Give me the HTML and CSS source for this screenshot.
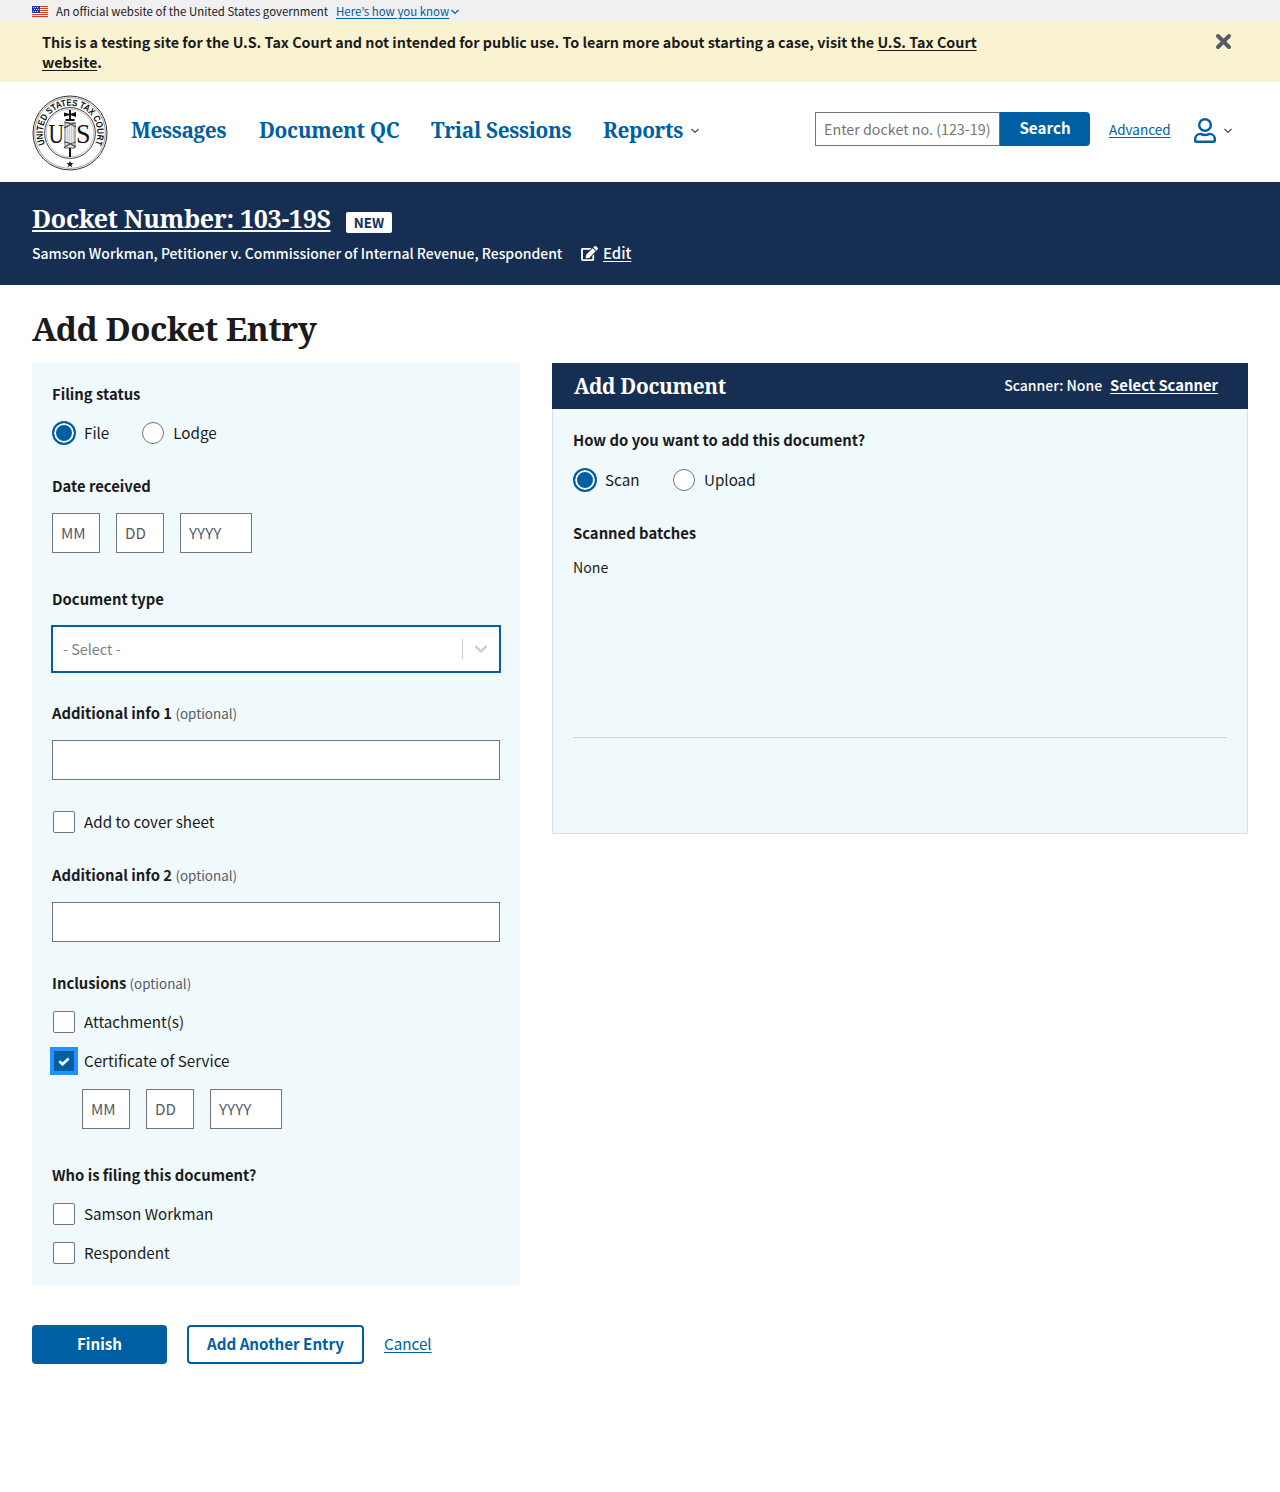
FILE: index.html
```html
<!DOCTYPE html>
<html lang="en">
<head>
<meta charset="utf-8">
<title>Add Docket Entry</title>
<link rel="stylesheet" href="styles.css">
</head>
<body>
<div class="gov-banner">
  <svg class="flag" width="16" height="11" viewBox="0 0 16 11" shape-rendering="crispEdges">
    <rect width="16" height="11" fill="#fff"/>
    <path d="M0 .5h16M0 2.5h16M0 4.5h16M0 6.5h16M0 8.5h16M0 10.5h16" stroke="#db3e1f"/>
    <rect width="8" height="7" fill="#1e33b1"/>
    <path d="M1 1.5h1m1 0h1m1 0h1M2 3.5h1m1 0h1m1 0h1M1 5.5h1m1 0h1m1 0h1" stroke="#dfe3f5"/>
  </svg>
  <span class="gov-text">An official website of the United States government</span>
  <a class="gov-link" href="#">Here’s how you know</a>
  <svg class="gov-chevron" width="8" height="6" viewBox="0 0 8 6"><path d="M.5 1 4 4.4 7.5 1" fill="none" stroke="#005ea2" stroke-width="1.2"/></svg>
</div>

<div class="notice">
  <p class="notice-text">This is a testing site for the U.S. Tax Court and not intended for public use. To learn more about starting a case, visit the <a href="#">U.S. Tax Court</a><br><a href="#">website</a>.</p>
  <svg class="notice-close" width="17" height="17" viewBox="0 0 17 17"><path d="M3 3 14 14M14 3 3 14" stroke="#565c65" stroke-width="4" stroke-linecap="round"/></svg>
</div>

<header class="site-header">
  <svg class="seal" width="76" height="76" viewBox="-38 -38 76 76">
    <defs><path id="ring" d="M0 27.3A27.3 27.3 0 0 1 0 -27.3A27.3 27.3 0 0 1 0 27.3"/></defs>
    <circle r="37" fill="#fff" stroke="#333" stroke-width="1"/>
    <circle r="35.4" fill="none" stroke="#777" stroke-width=".7"/>
    <circle r="25.4" fill="none" stroke="#444" stroke-width="1"/>
    <circle r="23.8" fill="none" stroke="#999" stroke-width=".6"/>
    <text class="seal-ring"><textPath href="#ring" startOffset="50%" text-anchor="middle" textLength="109" lengthAdjust="spacingAndGlyphs">UNITED STATES TAX COURT</textPath></text>
    <text class="seal-letter" x="-21.5" y="9.5" textLength="15.5" lengthAdjust="spacingAndGlyphs">U</text>
    <text class="seal-letter" x="6" y="9.5" textLength="14.5" lengthAdjust="spacingAndGlyphs">S</text>
    <path d="M-5-10H5V15H-5z" fill="#fff" stroke="#555" stroke-width=".9"/>
    <path d="M-2.8-9V15M-.8-9V15M1.2-9V15M3.2-9V15" stroke="#888" stroke-width=".6"/>
    <path d="M0-23V-12M0 15V24" stroke="#111" stroke-width="2"/>
    <path d="M-6-20.500V-16.500L0-18 6-16V-21L0-19ZM-4.500-14H4.500V-12H-4.500Z" fill="#111"/>
    <path d="M-6-11C-1-11 2-8 6-6M-6-5C-2-7 2-10 6-10M-6 9C-1 9 2 12 6 14M-6 15C-2 11 2 10 6 9" fill="none" stroke="#444" stroke-width="1.200"/>
    <path d="m0 27.700.900 2.400 2.500.100-2 1.600.700 2.400L0 32.800l-2.100 1.400.700-2.400-2-1.600 2.500-.100z" fill="#111"/>
  </svg>
  <nav class="nav">
    <a class="nav-link nav-messages" href="#">Messages</a>
    <a class="nav-link nav-qc" href="#">Document QC</a>
    <a class="nav-link nav-trial" href="#">Trial Sessions</a>
    <a class="nav-link nav-reports" href="#">Reports</a>
    <svg class="chevron" width="8" height="6" viewBox="0 0 8 6"><path d="M.5 1 4 4.5 7.5 1" fill="none" stroke="#3d4551" stroke-width="1.1"/></svg>
  </nav>
  <form class="search">
    <span class="search-input">Enter docket no. (123-19)</span>
    <button class="search-button" type="button">Search</button>
  </form>
  <a class="advanced" href="#">Advanced</a>
  <svg class="user" width="22" height="26" viewBox="0 0 22 26"><g fill="none" stroke="#005ea2" stroke-width="2.4"><circle cx="11" cy="7" r="5.8"/><path d="M6.7 15.9C9.5 17.3 12.5 17.3 15.3 15.9C18.9 15.9 20.8 18.3 20.8 21.3V22.5Q20.8 23.8 19.5 23.8H2.5Q1.2 23.8 1.2 22.5V21.3C1.2 18.3 3.1 15.9 6.7 15.9Z"/></g></svg>
  <svg class="chevron" width="8" height="6" viewBox="0 0 8 6"><path d="M.5 1 4 4.5 7.5 1" fill="none" stroke="#3d4551" stroke-width="1.1"/></svg>
</header>

<section class="docket">
  <div class="docket-top">
    <a class="docket-number" href="#">Docket Number: 103-19S</a>
    <span class="tag">NEW</span>
  </div>
  <div class="docket-bottom">
    <span class="caption">Samson Workman, Petitioner v. Commissioner of Internal Revenue, Respondent</span>
    <svg class="edit-icon" width="17" height="15" viewBox="0 0 576 512"><path fill="#fff" d="M402.600 83.200l90.200 90.200c3.800 3.800 3.800 10 0 13.800L274.400 405.600l-92.800 10.300c-12.400 1.400-22.900-9.100-21.500-21.500l10.300-92.800L388.800 83.200c3.800-3.800 10-3.800 13.800 0zm162-22.900l-48.800-48.800c-15.200-15.200-39.900-15.200-55.200 0l-35.400 35.400c-3.800 3.800-3.800 10 0 13.800l90.200 90.200c3.800 3.800 10 3.800 13.800 0l35.400-35.400c15.200-15.300 15.200-40 0-55.200zM384 346.200V448H64V128h229.800c3.200 0 6.200-1.300 8.500-3.500l40-40c7.600-7.600 2.200-20.500-8.500-20.500H48C21.500 64 0 85.500 0 112v352c0 26.500 21.500 48 48 48h352c26.500 0 48-21.500 48-48V306.200c0-10.700-12.900-16-20.500-8.500l-40 40c-2.200 2.300-3.500 5.300-3.500 8.500z"/></svg>
    <a class="edit" href="#">Edit</a>
  </div>
</section>

<main class="main">
  <h1 class="title">Add Docket Entry</h1>
  <div class="columns">
    <section class="panel form-panel">
      <div class="label">Filing status</div>
      <div class="options">
        <label class="option"><span class="radio radio-on"></span>File</label>
        <label class="option"><span class="radio"></span>Lodge</label>
      </div>
      <div class="label gap-30">Date received</div>
      <div class="dates"><span class="field short">MM</span><span class="field short">DD</span><span class="field year">YYYY</span></div>
      <div class="label gap-35">Document type</div>
      <div class="select"><span class="select-text">- Select -</span><span class="select-divider"></span><svg width="14" height="9" viewBox="0 0 14 9"><path d="m2 1.700 5 4.800 5-4.800" fill="none" stroke="#ccc" stroke-width="2.300" stroke-linecap="round"/></svg></div>
      <div class="label gap-29">Additional info 1 <span class="optional">(optional)</span></div>
      <div class="field wide"></div>
      <label class="option gap-30"><span class="check"></span>Add to cover sheet</label>
      <div class="label gap-30">Additional info 2 <span class="optional">(optional)</span></div>
      <div class="field wide"></div>
      <div class="label gap-30">Inclusions <span class="optional">(optional)</span></div>
      <label class="option gap-16"><span class="check"></span>Attachment(s)</label>
      <label class="option gap-15"><span class="check check-on"><svg width="12" height="9" viewBox="0 0 12 9"><path d="M1.300 4.300 4.500 7.300 10.700 1.500" fill="none" stroke="#fff" stroke-width="2.700"/></svg></span>Certificate of Service</label>
      <div class="dates indented"><span class="field short">MM</span><span class="field short">DD</span><span class="field year">YYYY</span></div>
      <div class="label gap-35">Who is filing this document?</div>
      <label class="option gap-16"><span class="check"></span>Samson Workman</label>
      <label class="option gap-15"><span class="check"></span>Respondent</label>
    </section>

    <section class="panel document-panel">
      <div class="document-head">
        <h2 class="document-title">Add Document</h2>
        <span class="scanner">Scanner: None</span>
        <a class="select-scanner" href="#">Select Scanner</a>
      </div>
      <div class="document-body">
        <div class="label">How do you want to add this document?</div>
        <div class="options scan-options">
          <label class="option"><span class="radio radio-on"></span>Scan</label>
          <label class="option"><span class="radio"></span>Upload</label>
        </div>
        <div class="label gap-30">Scanned batches</div>
        <div class="none">None</div>
        <hr class="rule">
      </div>
    </section>
  </div>
  <div class="actions">
    <button class="button primary" type="button">Finish</button>
    <button class="button outline" type="button">Add Another Entry</button>
    <a class="cancel" href="#">Cancel</a>
  </div>
</main>
</body>
</html>
```

FILE: styles.css
```css
* { box-sizing: border-box; }
body {
  margin: 0;
  min-height: 1492px;
  background: #fff;
  color: #1b1b1b;
  font: 15.2px/22px "Source Sans Pro", "Noto Sans CJK JP", "Noto Sans", sans-serif;
  white-space: nowrap;
}
svg { display: block; flex: none; }
a { color: #005ea2; text-decoration: underline; text-decoration-thickness: 1px; text-underline-offset: 2px; }
button { font: inherit; margin: 0; padding: 0; white-space: nowrap; }

.gov-banner { display: flex; align-items: center; height: 22px; padding: 0 32px; background: #f0f0f0; font-size: 11.48px; line-height: 18px; }
.gov-text { width: 280px; margin-left: 8px; }
.gov-link { margin-right: 2px; }
.flag { margin-top: 1px; }
.gov-chevron { margin-top: 2px; }

.notice { display: flex; justify-content: space-between; height: 60px; padding: 10px 48px 0 42px; background: #faf3d1; }
.notice-text { margin: 0; font-size: 14.33px; line-height: 20px; font-weight: 700; }
.notice-text a { color: inherit; }
.notice-close { margin-top: 1px; }

.site-header { display: flex; align-items: center; height: 100px; padding: 0 48px 0 32px; }
.seal { margin-top: 1px; }
.seal-ring { font: 700 9.4px "Liberation Sans", Arial, sans-serif; fill: #111; }
.seal-letter { font: 28px "Liberation Serif", serif; fill: #111; }
.nav { display: flex; align-items: center; width: 707px; padding-left: 23px; }
.nav-link { font: 700 20.8px/30px "Source Serif Pro", "Noto Serif", "Liberation Serif", serif; letter-spacing: -0.33px; text-decoration: none; margin-top: -5px; }
.nav-messages { width: 128px; }
.nav-qc { width: 172px; }
.nav-trial { width: 172px; }
.nav-reports { width: 88px; }
.chevron { margin-top: -3px; }
.search { display: flex; width: 275px; height: 34px; margin-top: -6px; }
.search-input { width: 185px; border: 1px solid #71767a; padding-left: 8px; line-height: 31px; font-size: 14.3px; color: #757575; }
.search-button { width: 90px; border: 0; border-radius: 0 4px 4px 0; background: #005ea2; color: #fff; font-size: 15.2px; font-weight: 700; line-height: 30px; padding-bottom: 4px; }
.advanced { width: 85px; padding-left: 19px; font-size: 13.5px; margin: -7px 0 0; }
.user { margin: -2px 8px 0 auto; }

.docket { height: 103px; padding: 20px 32px 0; background: #162e51; color: #fff; }
.docket a { color: #fff; }
.docket-top { display: flex; align-items: flex-start; height: 40px; }
.docket-top .docket-number { width: 314px; font: 700 25px/32px "Source Serif Pro", "Noto Serif", "Liberation Serif", serif; letter-spacing: -0.32px; text-decoration-thickness: 2px; }
.tag { width: 46px; height: 21px; margin-top: 10px; border-radius: 2px; background: #fff; color: #162e51; font-size: 13.3px; line-height: 22px; font-weight: 700; text-align: center; }
.docket-bottom { display: flex; align-items: center; font-size: 13.97px; font-weight: 500; }
.caption { width: 549px; }
.edit { margin-left: 5px; font-size: 14.9px; }

.main { padding: 0 32px; }
.title { margin: 0; padding-top: 24px; height: 78px; font: 700 33px/40px "Source Serif Pro", "Noto Serif", "Liberation Serif", serif; letter-spacing: -0.55px; }
.columns { display: flex; align-items: flex-start; gap: 32px; }
.panel { background: #f0f9fc; }
.form-panel { width: 488px; height: 922px; padding: 20px; }
.label { height: 22px; font-weight: 700; font-size: 14.82px; }
.optional { font-weight: 400; font-size: 13.4px; color: #565c65; }
.gap-15 { margin-top: 15px; }
.gap-16 { margin-top: 16px; }
.gap-29 { margin-top: 29px; }
.gap-30 { margin-top: 30px; }
.gap-35 { margin-top: 35px; }
.options { display: flex; gap: 33px; margin-top: 16px; }
.option { display: flex; align-items: flex-start; height: 24px; }
.radio, .check { align-self: center; }
.radio { width: 22px; height: 22px; margin: 0 9px 0 0; border: 1px solid #71767a; border-radius: 50%; background: #fff; }
.radio-on { width: 24px; height: 24px; margin: 0 8px 0 0; border: 2px solid #005ea2; background: #005ea2; box-shadow: inset 0 0 0 2px #fff; }
.check { display: flex; width: 22px; height: 22px; margin: 0 9px 0 1px; border: 1px solid #71767a; border-radius: 2px; background: #fff; }
.check-on { align-items: center; justify-content: center; width: 20px; height: 20px; margin: 0 10px 0 2px; border: 0; border-radius: 0; background: #005ea2; outline: 4px solid #2491ff; }
.dates { display: flex; gap: 16px; margin-top: 16px; }
.indented { margin-left: 30px; }
.field { height: 40px; padding-left: 8px; border: 1px solid #71767a; background: #fff; color: #565c65; line-height: 37px; }
.short { width: 48px; }
.year { width: 72px; }
.wide { margin-top: 16px; }
.select { display: flex; align-items: center; height: 48px; margin: 15px -1px 0; padding: 0 11px 0 10px; border: 2px solid #005ea2; background: #fff; color: #808080; font-size: 14.4px; }
.select-text { flex: 1; }
.select-divider { width: 1px; height: 20px; margin-right: 11px; background: #ccc; }

.document-panel { width: 696px; height: 471px; border: 1px solid #dcdee0; }
.document-head { display: flex; align-items: center; height: 46px; margin: -1px -1px 0; padding: 0 30px 0 22px; background: #162e51; color: #fff; font-size: 14px; }
.document-title { flex: 1; margin: 0; font: 700 20.8px/30px "Source Serif Pro", "Noto Serif", "Liberation Serif", serif; letter-spacing: -0.33px; }
.scanner { margin: -2px 8px 0 0; font-weight: 500; }
.select-scanner { margin-top: -2px; color: #fff; font-size: 14.8px; font-weight: 700; }
.document-body { padding: 20px; }
.scan-options { margin-top: 17px; gap: 33.5px; }
.none { margin-top: 12px; font-size: 14.2px; }
.rule { margin: 159px 0 0; border: 0; border-top: 1px solid #d6d7d9; }

.actions { display: flex; align-items: center; gap: 20px; margin-top: 40px; }
.button { height: 39px; border-radius: 4px; font-weight: 700; font-size: 15.16px; }
.primary { width: 135px; border: 0; padding-bottom: 3px; background: #005ea2; color: #fff; }
.outline { width: 177px; border: 2px solid #005ea2; padding-bottom: 3px; background: #fff; color: #005ea2; }
.cancel { margin-top: -3px; }
```
